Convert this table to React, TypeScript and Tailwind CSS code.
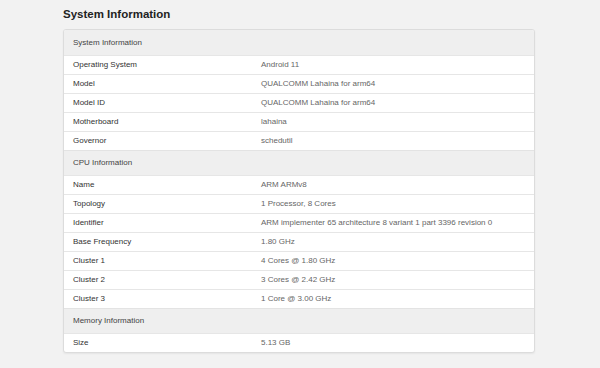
import React from "react";

type Row = [string, string];
const sections: { title: string; rows: Row[] }[] = [
  {
    title: "System Information",
    rows: [
      ["Operating System", "Android 11"],
      ["Model", "QUALCOMM Lahaina for arm64"],
      ["Model ID", "QUALCOMM Lahaina for arm64"],
      ["Motherboard", "lahaina"],
      ["Governor", "schedutil"],
    ],
  },
  {
    title: "CPU Information",
    rows: [
      ["Name", "ARM ARMv8"],
      ["Topology", "1 Processor, 8 Cores"],
      ["Identifier", "ARM implementer 65 architecture 8 variant 1 part 3396 revision 0"],
      ["Base Frequency", "1.80 GHz"],
      ["Cluster 1", "4 Cores @ 1.80 GHz"],
      ["Cluster 2", "3 Cores @ 2.42 GHz"],
      ["Cluster 3", "1 Core @ 3.00 GHz"],
    ],
  },
  {
    title: "Memory Information",
    rows: [["Size", "5.13 GB"]],
  },
];

export default function App() {
  return (
    <div
      className="w-[600px] h-[368px] bg-[#f2f2f2] overflow-hidden"
      style={{ fontFamily: '"Liberation Sans", Arial, sans-serif' }}
    >
      <div className="pl-[63px] pr-[65px]">
        <div className="h-[29px] flex items-center text-[11.5px] font-bold text-[#222] pt-[1px]">
          System Information
        </div>
        <div className="bg-white border border-[#dcdcdc] rounded-[3px] shadow-[0_1px_2px_rgba(0,0,0,0.06)] overflow-hidden">
          {sections.map((s, si) => (
            <div key={si}>
              <div
                className={
                  "h-[25px] flex items-center px-[9px] bg-[#efefef] text-[8px] text-[#444]" +
                  (si > 0 ? " border-t border-[#e3e3e3]" : "")
                }
              >
                {s.title}
              </div>
              {s.rows.map(([k, v], ri) => (
                <div
                  key={ri}
                  className="h-[19px] flex items-center border-t border-[#e6e6e6] text-[8px]"
                >
                  <div className="w-[197px] pl-[9px] text-[#333]">{k}</div>
                  <div className="text-[#666]">{v}</div>
                </div>
              ))}
            </div>
          ))}
        </div>
      </div>
    </div>
  );
}
